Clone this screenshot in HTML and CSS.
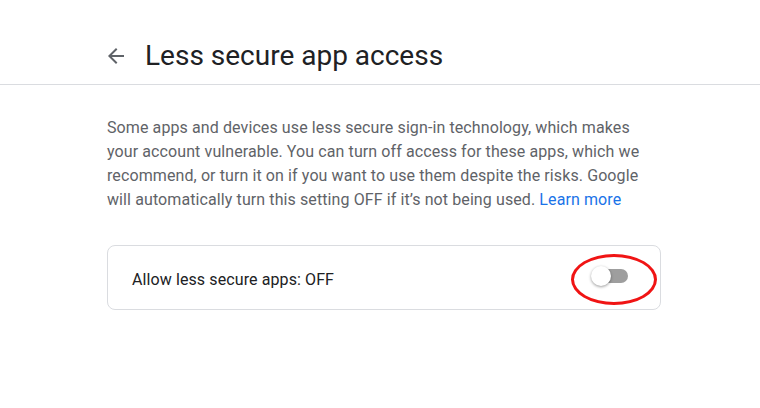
FILE: index.html
```html
<!DOCTYPE html>
<html>
<head>
<meta charset="utf-8">
<link rel="stylesheet" href="styles.css">
</head>
<body>
<header class="topbar">
  <div class="topbar-inner">
    <button class="back" aria-label="Back">
      <svg width="24" height="24" viewBox="0 0 24 24"><path d="M20 11H7.83l5.59-5.59L12 4l-8 8 8 8 1.41-1.41L7.83 13H20v-2z" fill="#5f6368"/></svg>
    </button>
    <h1 class="title">Less secure app access</h1>
  </div>
</header>
<main class="content">
  <p class="desc">Some apps and devices use less secure sign-in technology, which makes your account vulnerable. You can turn off access for these apps, which we recommend, or turn it on if you want to use them despite the risks. Google will automatically turn this setting OFF if it’s not being used. <a class="link" href="#">Learn more</a></p>
  <div class="card">
    <span class="card-label">Allow less secure apps: OFF</span>
    <div class="toggle-wrap">
      <span class="toggle"><span class="track"></span><span class="knob"></span></span>
      <span class="circle"></span>
    </div>
  </div>
</main>
</body>
</html>
```
FILE: styles.css
```css
* { box-sizing: border-box; }
body {
  margin: 0;
  background: #fff;
  font-family: Roboto, "Liberation Sans", Arial, sans-serif;
  color: #202124;
}
.topbar {
  border-bottom: 1px solid #dadce0;
  height: 85px;
}
.topbar-inner {
  display: flex;
  align-items: center;
  padding: 38px 0 0 104px;
}
.back {
  background: none;
  border: 0;
  padding: 0;
  width: 24px;
  height: 24px;
  margin-right: 17px;
  display: flex;
  cursor: pointer;
}
.title {
  margin: 0;
  font-weight: 400;
  font-size: 28px;
  line-height: 36px;
  color: #202124;
  letter-spacing: 0;
}
.content {
  padding: 31px 0 0 107px;
  width: 661px;
}
.desc {
  margin: 0;
  width: 548px;
  font-size: 16px;
  line-height: 24px;
  letter-spacing: 0.1px;
  color: #5f6368;
}
.link {
  color: #1a73e8;
  text-decoration: none;
}
.card {
  margin-top: 33px;
  height: 65px;
  border: 1px solid #dadce0;
  border-radius: 8px;
  display: flex;
  align-items: center;
  justify-content: space-between;
  padding: 0 3px 0 24px;
}
.card-label {
  font-size: 16px;
  letter-spacing: 0.1px;
  color: #202124;
  padding-top: 3px;
}
.toggle-wrap {
  position: relative;
  width: 86px;
  height: 51px;
  display: flex;
  align-items: center;
  justify-content: center;
  margin-top: 3px;
}
.toggle {
  position: relative;
  width: 37px;
  height: 20px;
  display: block;
  margin-top: -7px;
  margin-left: -10px;
}
.track {
  position: absolute;
  left: 2px;
  right: 0;
  top: 3px;
  height: 14px;
  border-radius: 7px;
  background: #9e9e9e;
}
.knob {
  position: absolute;
  left: 0;
  top: 0;
  width: 20px;
  height: 20px;
  border-radius: 50%;
  background: #fff;
  box-shadow: 0 1px 3px rgba(0,0,0,0.4);
}
.circle {
  position: absolute;
  inset: 0;
  border: 3px solid #f01414;
  border-radius: 50%;
}
```
